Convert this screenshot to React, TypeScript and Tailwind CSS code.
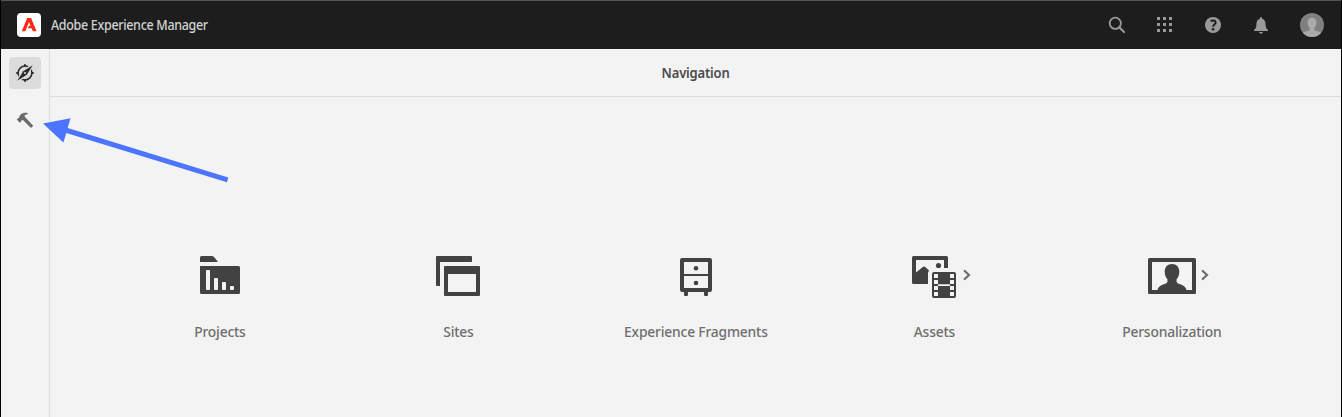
import type { ReactNode } from "react";

function Chevron() {
  return (
    <svg width="8" height="12" viewBox="0 0 8 12" className="absolute top-[17px] left-[53px]" fill="none" stroke="#6e6e6e" strokeWidth="2.200" strokeLinecap="round">
      <path d="M1.700 2 6 6 1.700 10" />
    </svg>
  );
}

function ProjectsIcon() {
  return (
    <svg width="48" height="48" viewBox="0 0 48 48" fill="#424242">
      <path d="M4 10V5.500Q4 4 5.500 4H16Q17.200 4 18 5L22 10Z" />
      <path fillRule="evenodd" d="M4 14H42.500Q44 14 44 15.500V40.500Q44 42 42.500 42H5.500Q4 42 4 40.500ZM11 18Q10 18 10 19V37Q10 38 11 38H13Q14 38 14 37V19Q14 18 13 18ZM19 26Q18 26 18 27V37Q18 38 19 38H21Q22 38 22 37V27Q22 26 21 26ZM27 30Q26 30 26 31V37Q26 38 27 38H29Q30 38 30 37V31Q30 30 29 30ZM35 34Q34 34 34 35V37Q34 38 35 38H37Q38 38 38 37V35Q38 34 37 34Z" />
    </svg>
  );
}

function SitesIcon() {
  return (
    <svg width="48" height="48" viewBox="0 0 48 48" fill="#424242">
      <path d="M3 4H37Q38 4 38 5V10H6V34H3Q2 34 2 33V5Q2 4 3 4Z" />
      <path fillRule="evenodd" d="M11 14H45Q46 14 46 15V43Q46 44 45 44H11Q10 44 10 43V15Q10 14 11 14ZM14 22V40H42V22Z" />
    </svg>
  );
}

function FragmentsIcon() {
  return (
    <svg width="48" height="48" viewBox="0 0 48 48" fill="#424242">
      <path fillRule="evenodd" d="M10 6H38Q40 6 40 8V38Q40 40 38 40H36V43Q36 44 35 44H33Q32 44 32 43V40H16V43Q16 44 15 44H13Q12 44 12 43V40H10Q8 40 8 38V8Q8 6 10 6ZM12 10V22H36V10ZM12 24V36H36V24Z" />
      <circle cx="24" cy="16.200" r="2.300" />
      <circle cx="24" cy="31" r="2.300" />
    </svg>
  );
}

function AssetsIcon() {
  return (
    <svg width="48" height="48" viewBox="0 0 48 48" fill="#424242">
      <path d="M3.500 4H36.500Q38 4 38 5.500V16H34V8H6V20.500L12.500 15.200Q14 14 15.500 15.200L19 18.500V19Q18 19.500 18 21V32H3.500Q2 32 2 30.500V5.500Q2 4 3.500 4Z" />
      <circle cx="28.500" cy="13.500" r="2.600" />
      <path fillRule="evenodd" d="M24 20H44Q46 20 46 22V44Q46 46 44 46H24Q22 46 22 44V22Q22 20 24 20ZM24 22V26H28V22ZM24 28V32H28V28ZM24 34V38H28V34ZM24 40V44H28V40ZM40 22V26H44V22ZM40 28V32H44V28ZM40 34V38H44V34ZM40 40V44H44V40ZM28 32.300V33.900H40V32.300Z" />
    </svg>
  );
}

function PersonIcon() {
  return (
    <svg width="48" height="48" viewBox="0 0 48 48" fill="#424242">
      <path fillRule="evenodd" d="M1.500 6H46.500Q48 6 48 7.500V40.500Q48 42 46.500 42H1.500Q0 42 0 40.500V7.500Q0 6 1.500 6ZM4 10V38H44V10Z" />
      <path d="M24 12C19.500 12 16.700 15 16.700 19.700C16.700 22.700 17.700 25.300 19.500 27.400Q20 30.700 18 31.600C14 33 10.500 34 9.500 38H38.500C37.500 34 34 33 30 31.600Q28 30.700 28.500 27.400C30.300 25.300 31.300 22.700 31.300 19.700C31.300 15 28.500 12 24 12Z" />
    </svg>
  );
}

function Tile({ icon, label, more }: { icon: ReactNode; label: string; more?: boolean }) {
  return (
    <div className="flex w-[238px] flex-col items-center">
      <div className="relative h-12 w-12">
        {icon}
        {more && <Chevron />}
      </div>
      <div className="mt-[19px] h-6 scale-x-[0.922] text-[15px] leading-6 font-medium tracking-[-0.2px] whitespace-nowrap text-[#6e6e6e]">{label}</div>
    </div>
  );
}

export default function App() {
  return (
    <div className="relative flex h-[417px] w-[1342px] flex-col overflow-hidden border-x border-black bg-[#f3f3f3] font-['Noto_Sans',sans-serif]">
      <header className="flex h-[49px] shrink-0 items-center border-t border-[#555] bg-[#1d1d1d] pl-4">
        <svg width="24" height="24" viewBox="0 0 24 24">
          <rect width="24" height="24" rx="4" fill="#fff" />
          <path d="M10.200 5H14.100L19.600 18.300H15.800L14.600 15.300H10.900L12.100 12.800H13.500L12 9L8.400 18.300H4.800Z" fill="#fa2c19" />
        </svg>
        <div className="mb-0.5 ml-[10px] origin-left scale-x-[0.892] text-[14px] font-medium tracking-[-0.35px] whitespace-nowrap text-[#d2d2d2]">Adobe Experience Manager</div>
        <div className="ml-auto flex items-center pr-[17px] text-[#999]">
          <svg width="18" height="18" viewBox="0 0 18 18" className="mr-[30px]" fill="none" stroke="currentColor">
            <circle cx="7.300" cy="7.300" r="5.600" strokeWidth="1.800" />
            <path d="m11.500 11.500 4.500 4.500" strokeWidth="2.200" strokeLinecap="round" />
          </svg>
          <svg width="18" height="18" viewBox="0 0 18 18" className="mr-[30px]" fill="currentColor">
            <path d="M1 1h3v3H1zM7 1h3v3H7zM13 1h3v3h-3zM1 7h3v3H1zM7 7h3v3H7zM13 7h3v3h-3zM1 13h3v3H1zM7 13h3v3H7zM13 13h3v3h-3z" />
          </svg>
          <svg width="18" height="18" viewBox="0 0 18 18" className="mr-[30px]">
            <circle cx="9" cy="9" r="8" fill="currentColor" />
            <path d="M6.600 5.200C8.500 3.900 11.600 4.300 11.600 6.500C11.600 8.500 9.100 8.500 9.100 10.700" fill="none" stroke="#1d1d1d" strokeWidth="2" />
            <circle cx="9.100" cy="13.200" r="1.300" fill="#1d1d1d" />
          </svg>
          <svg width="18" height="18" viewBox="0 0 18 18" className="mr-[30px]" fill="currentColor">
            <path d="M9 1Q10 1 10 2V2.800C12.700 3.300 13.600 5.500 13.600 8.200C13.600 11.700 14.500 12.500 16 14V15H2V14C3.500 12.500 4.400 11.700 4.400 8.200C4.400 5.500 5.300 3.300 8 2.800V2Q8 1 9 1ZM7 16H11Q10.600 17.800 9 17.800Q7.400 17.800 7 16Z" />
          </svg>
          <svg width="24" height="24" viewBox="0 0 24 24">
            <defs><clipPath id="avatar"><circle cx="12" cy="12" r="12" /></clipPath></defs>
            <circle cx="12" cy="12" r="12" fill="#808080" />
            <path clipPath="url(#avatar)" d="M12 4.800C9.300 4.800 7.500 6.600 7.500 9.600Q7.500 12.400 9.500 14.600V17.500C7 18.500 4 18.300 2.800 20V24H21.200V20C20 18.300 17 18.500 14.500 17.500V14.600Q16.500 12.400 16.500 9.600C16.500 6.600 14.700 4.800 12 4.800Z" fill="#aaa" />
          </svg>
        </div>
      </header>
      <div className="flex min-h-0 flex-1">
        <aside className="flex w-[49px] shrink-0 flex-col items-center gap-4 border-r border-[#dcdcdc] pt-2">
          <div className="flex h-8 w-8 items-center justify-center rounded bg-[#dcdcdc]">
            <svg width="18" height="18" viewBox="0 0 18 18">
              <circle cx="9" cy="9" r="6.900" fill="none" stroke="#2c2c2c" strokeWidth="1.500" />
              <path d="M9 .3V2.500M9 15.500v2.200M.3 9H2.500M15.500 9h2.200" stroke="#2c2c2c" strokeWidth="2" />
              <path d="M1 17L7 6.600L17 1L11 11.400Z" fill="#dcdcdc" stroke="#dcdcdc" strokeWidth="2" />
              <path d="M1.300 16.700L7.200 7.200L16.700 1.300L10.800 10.800Z" fill="#2c2c2c" />
              <circle cx="9" cy="9" r="1" fill="#dcdcdc" />
            </svg>
          </div>
          <div className="flex h-8 w-8 items-center justify-center">
            <svg width="18" height="18" viewBox="0 0 18 18" fill="#6a6a6a">
              <path d="M.8 7.600L2.300 6.100L3.100 5.900C3.400 2.600 6.700.2 11.300 1L12 1.600L11.400 2.300C9.200 2.500 8.500 3.200 8.500 4.600L9.500 5.600L17.200 13.800L15 16.100L7.200 8.300L6.300 7.900L5.400 8.400L5.500 9L3.800 10.700Z" />
            </svg>
          </div>
        </aside>
        <main className="flex min-w-0 flex-1 flex-col">
          <div className="flex h-12 shrink-0 items-center justify-center border-b border-[#dcdcdc]">
            <h1 className="scale-x-[0.93] text-[14px] font-semibold tracking-[-0.2px] text-[#4b4b4b]">Navigation</h1>
          </div>
          <div className="flex justify-center pt-[155px] pl-px">
            <Tile icon={<ProjectsIcon />} label="Projects" />
            <Tile icon={<SitesIcon />} label="Sites" />
            <Tile icon={<FragmentsIcon />} label="Experience Fragments" />
            <Tile icon={<AssetsIcon />} label="Assets" more />
            <Tile icon={<PersonIcon />} label="Personalization" more />
          </div>
        </main>
      </div>
      <svg className="pointer-events-none absolute top-[110px] left-[40px]" width="195" height="80" viewBox="41 110 195 80">
        <path d="M43 123.500L70.500 118.300L67.700 127.900L228.300 177.500L227 182.200L66.300 133L63.400 142.500Z" fill="#4b75ff" />
      </svg>
    </div>
  );
}
